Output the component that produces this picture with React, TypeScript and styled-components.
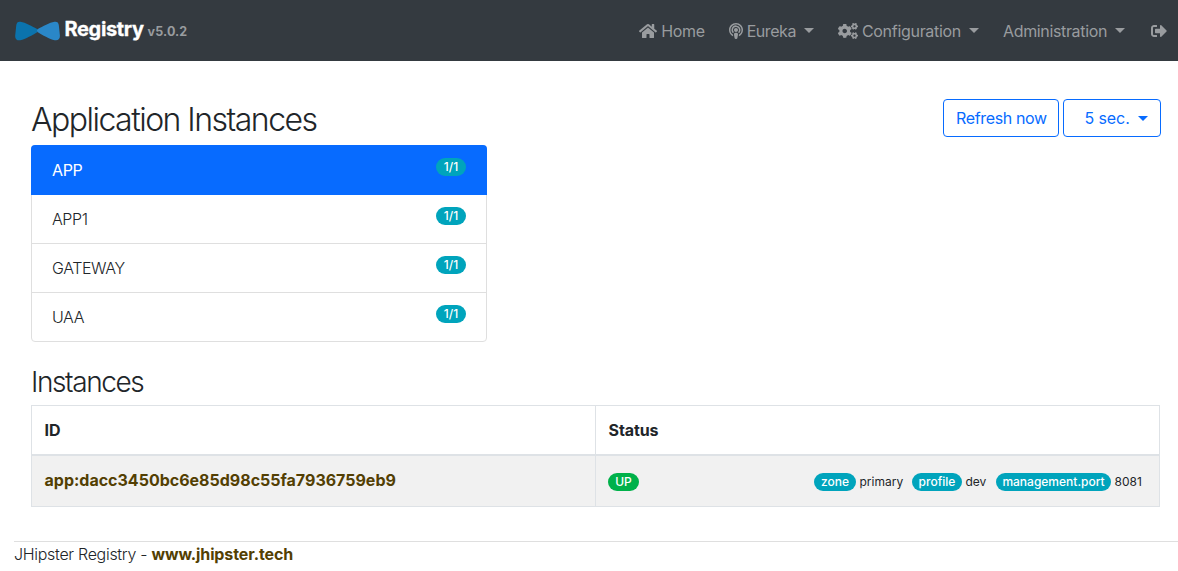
import React from "react";
import styled, { createGlobalStyle } from "styled-components";
import { FaHome, FaPodcast, FaCogs, FaSignOutAlt } from "react-icons/fa";

const GlobalStyle = createGlobalStyle`
  *, *::before, *::after { box-sizing: border-box; }
  body {
    margin: 0;
    background: #fff;
    color: #212529;
    font-family: Inter, "Liberation Sans", sans-serif;
    font-size: 16px;
    line-height: 24px;
    overflow: hidden;
  }
`;

const Navbar = styled.nav`
  display: flex;
  align-items: center;
  justify-content: space-between;
  height: 61px;
  padding: 0 3px 0 15px;
  background: #343a40;
`;

const Brand = styled.a`
  display: flex;
  align-items: baseline;
  color: #fff;
`;

const Logo = styled.svg`
  width: 46px;
  height: 20px;
  margin-right: 3.5px;
  align-self: center;
`;

const BrandName = styled.span`
  font-size: 20px;
  font-weight: 700;
  letter-spacing: -0.35px;
  -webkit-text-stroke: 0.3px currentColor;
`;

const Version = styled.span`
  margin-left: 4px;
  color: #999c9f;
  font-size: 12.5px;
  font-weight: 700;
  letter-spacing: 0.1px;
`;

const NavList = styled.ul`
  display: flex;
  gap: 8px;
  margin: 0;
  padding: 0;
  list-style: none;
`;

const NavLink = styled.a<{ $iconWidth?: number; $spacing?: number; $iconOnly?: boolean }>`
  display: flex;
  align-items: center;
  height: 24px;
  padding: 0 8px 0 ${(p) => (p.$iconOnly ? 10 : 8)}px;
  color: #999c9f;
  letter-spacing: ${(p) => p.$spacing ?? 0}px;
  white-space: nowrap;

  svg {
    width: ${(p) => p.$iconWidth ?? 16}px;
    height: 16px;
    margin-right: ${(p) => (p.$iconOnly ? 0 : 4)}px;
  }
`;

const Caret = styled.span`
  margin-left: 8px;
  border-top: 5px solid currentColor;
  border-left: 5px solid transparent;
  border-right: 5px solid transparent;
`;

const Main = styled.main`
  padding: 38px 18px 0 31px;
`;

const TitleRow = styled.header`
  display: flex;
  justify-content: space-between;
  height: 46px;
  margin-right: -1px;
`;

const Title = styled.h2`
  margin: 0;
  font-size: 32px;
  font-weight: 300;
  line-height: 41px;
  letter-spacing: -1.52px;
`;

const Subtitle = styled.h3`
  margin: 23px 0 6px;
  font-size: 28px;
  font-weight: 300;
  line-height: 34px;
  letter-spacing: -1.4px;
`;

const Actions = styled.div`
  display: flex;
  gap: 4px;
`;

const Button = styled.button<{ $width: number; $indent?: number }>`
  display: flex;
  align-items: center;
  width: ${(p) => p.$width}px;
  height: 38px;
  padding: 0 0 0 ${(p) => p.$indent ?? 12}px;
  border: 1px solid #076bff;
  border-radius: 4px;
  background: #fff;
  color: #076bff;
  font: inherit;
  letter-spacing: ${(p) => (p.$indent ? -0.1 : -0.35)}px;
  white-space: nowrap;
`;

const AppList = styled.ul`
  width: 456px;
  margin: 0;
  padding: 0;
  list-style: none;
  border: 1px solid #dfdfdf;
  border-radius: 4px;
`;

const AppItem = styled.li<{ $active?: boolean }>`
  display: flex;
  justify-content: space-between;
  align-items: flex-start;
  height: ${(p) => (p.$active ? 50 : 49)}px;
  margin: ${(p) => (p.$active ? "-1px -1px 0" : "0")};
  padding: ${(p) => (p.$active ? "13px 21px" : "12px 20px")};
  border-bottom: ${(p) => (p.$active ? "0" : "1px solid #dfdfdf")};
  border-radius: ${(p) => (p.$active ? "4px 4px 0 0" : "0")};
  background: ${(p) => (p.$active ? "#076bff" : "transparent")};
  color: ${(p) => (p.$active ? "#fff" : "inherit")};
  font-weight: ${(p) => (p.$active ? 400 : 300)};
  letter-spacing: -0.4px;

  &:last-child {
    height: 48px;
    border-bottom: 0;
  }
`;

const Badge = styled.span<{ $width: number; $color?: string }>`
  display: inline-flex;
  flex-shrink: 0;
  justify-content: center;
  align-items: center;
  width: ${(p) => p.$width}px;
  height: 18px;
  border-radius: 9px;
  background: ${(p) => p.$color ?? "#00a4bc"};
  color: #fff;
  font-size: 12px;
  font-weight: 500;
  line-height: 18px;
  letter-spacing: 0;
`;

const Table = styled.div`
  display: grid;
  grid-template-columns: 563px 1fr;
  border: 1px solid #dee2e6;
`;

const HeadCell = styled.div`
  height: 48px;
  padding: 12px 12.5px;
  font-weight: 700;
  letter-spacing: -0.1px;

  & + & {
    border-left: 1px solid #dee2e6;
  }
`;

const BodyCell = styled.div<{ $divided?: boolean }>`
  display: flex;
  align-items: center;
  justify-content: space-between;
  height: 52px;
  padding: ${(p) => (p.$divided ? "2px 12px 0" : "0 12.5px 2px")};
  border-top: 2px solid #dee2e6;
  border-left: ${(p) => (p.$divided ? "1px solid #dee2e6" : "0")};
  background: #f1f1f1;
`;

const StrongLink = styled.a<{ $spacing: number }>`
  color: #533f03;
  font-weight: 700;
  letter-spacing: ${(p) => p.$spacing}px;
`;

const MetaList = styled.div`
  display: flex;
  gap: 10px;
  padding-right: 4px;
  font-size: 12px;
  line-height: 18px;
`;

const Meta = styled.span<{ $width: number }>`
  display: flex;
  gap: 3.5px;
  width: ${(p) => p.$width}px;
  white-space: nowrap;
`;

const Footer = styled.footer`
  margin: 34px 0 0 14px;
  border-top: 1px solid #dfdfdf;
  font-weight: 300;
  letter-spacing: -0.3px;
`;

const apps = ["APP", "APP1", "GATEWAY", "UAA"];

const metadata = [
  { key: "zone", value: "primary", badge: 42, width: 88 },
  { key: "profile", value: "dev", badge: 50, width: 74 },
  { key: "management.port", value: "8081", badge: 115, width: 147 },
];

export default function App() {
  return (
    <>
      <GlobalStyle />
      <Navbar>
        <Brand>
          <Logo viewBox="0 0 46 20">
            <path
              d="M5.5.7C2.7.4 1.8 1.5 1.3 4L.2 14.5C-.1 18 2 19.8 5.3 19.2 10.500 18.200 17.500 14 22.500 11V8.200C17 5.200 10.500 1.500 5.500.7Z"
              fill="#0b73ad"
            />
            <path
              d="M39.5.7C42.3.4 43.4 1.5 43.8 4L44.900 14.500C45.200 18 43 19.800 39.700 19.200 34.500 18.200 27.500 14 22.500 11L21.800 9.600 22.500 8.200C28 5.200 34.500 1.500 39.500.7Z"
              fill="#2a87c8"
            />
          </Logo>
          <BrandName>Registry</BrandName>
          <Version>v5.0.2</Version>
        </Brand>
        <NavList>
          <li>
            <NavLink $iconWidth={18} $spacing={-0.35}>
              <FaHome />
              Home
            </NavLink>
          </li>
          <li>
            <NavLink $iconWidth={14} $spacing={-0.45}>
              <FaPodcast />
              Eureka
              <Caret />
            </NavLink>
          </li>
          <li>
            <NavLink $iconWidth={20} $spacing={-0.3}>
              <FaCogs />
              Configuration
              <Caret />
            </NavLink>
          </li>
          <li>
            <NavLink $spacing={-0.35}>
              Administration
              <Caret />
            </NavLink>
          </li>
          <li>
            <NavLink $iconOnly>
              <FaSignOutAlt />
            </NavLink>
          </li>
        </NavList>
      </Navbar>
      <Main>
        <TitleRow>
          <Title>Application Instances</Title>
          <Actions>
            <Button $width={116}>Refresh now</Button>
            <Button $width={98} $indent={20.5}>
              5 sec.
              <Caret />
            </Button>
          </Actions>
        </TitleRow>
        <AppList>
          {apps.map((name, i) => (
            <AppItem key={name} $active={i === 0}>
              {name}
              <Badge $width={30}>1/1</Badge>
            </AppItem>
          ))}
        </AppList>
        <Subtitle>Instances</Subtitle>
        <Table>
          <HeadCell>ID</HeadCell>
          <HeadCell>Status</HeadCell>
          <BodyCell>
            <StrongLink $spacing={0}>app:dacc3450bc6e85d98c55fa7936759eb9</StrongLink>
          </BodyCell>
          <BodyCell $divided>
            <Badge $width={31} $color="#00b14a">
              UP
            </Badge>
            <MetaList>
              {metadata.map((m) => (
                <Meta key={m.key} $width={m.width}>
                  <Badge $width={m.badge}>{m.key}</Badge>
                  {m.value}
                </Meta>
              ))}
            </MetaList>
          </BodyCell>
        </Table>
      </Main>
      <Footer>
        JHipster Registry - <StrongLink $spacing={-0.1}>www.jhipster.tech</StrongLink>
      </Footer>
    </>
  );
}
